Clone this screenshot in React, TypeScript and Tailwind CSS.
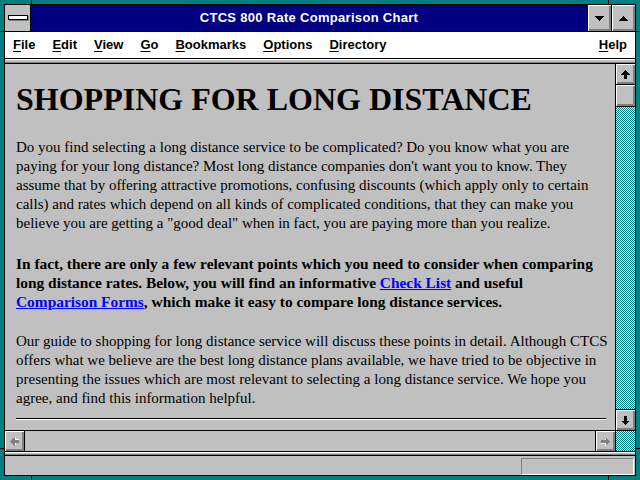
import React from 'react';

const bevel = 'bg-[#c0c0c0] shadow-[inset_1px_1px_0_#ffffff,inset_-1px_-1px_0_#808080,inset_-2px_-2px_0_#808080]';
const dither = 'bg-[repeating-conic-gradient(#008080_0_25%,#ffffff_0_50%)] bg-[length:2px_2px]';

function Arrow({ dir, disabled }: { dir: 'up' | 'down' | 'left' | 'right'; disabled?: boolean }) {
  const rot = { up: 0, right: 90, down: 180, left: 270 }[dir];
  const pts = '4.5,0 9,4.5 6,4.5 6,9 3,9 3,4.5 0,4.5';
  return (
    <svg width="9" height="9" viewBox="0 0 9 9" shapeRendering="crispEdges" style={{ transform: `rotate(${rot}deg)` }}>
      {disabled ? (
        <>
          <polygon points={pts} fill="#ffffff" transform="translate(1,1)" />
          <polygon points={pts} fill="#808080" />
        </>
      ) : (
        <polygon points={pts} fill="#000000" />
      )}
    </svg>
  );
}

function Triangle({ up }: { up?: boolean }) {
  return (
    <svg width="9" height="5" viewBox="0 0 9 5" shapeRendering="crispEdges">
      <polygon points={up ? '4.5,0 9,5 0,5' : '0,0 9,0 4.5,5'} fill="#000000" />
    </svg>
  );
}

function MenuItem({ first, rest }: { first: string; rest: string }) {
  return (
    <span>
      <span className="underline underline-offset-2">{first}</span>
      {rest}
    </span>
  );
}

export default function App() {
  return (
    <div className="relative w-[640px] h-[480px] bg-[#008080] p-[4px]">
      {/* frame corner marks */}
      <div className="absolute left-[31px] top-0 w-px h-[5px] bg-black" />
      <div className="absolute left-[608px] top-0 w-px h-[5px] bg-black" />
      <div className="absolute left-[31px] bottom-0 w-px h-[5px] bg-black" />
      <div className="absolute left-[608px] bottom-0 w-px h-[5px] bg-black" />
      <div className="absolute left-0 top-[31px] w-[5px] h-px bg-black" />
      <div className="absolute right-0 top-[31px] w-[5px] h-px bg-black" />
      <div className="absolute left-0 top-[448px] w-[5px] h-px bg-black" />
      <div className="absolute right-0 top-[448px] w-[5px] h-px bg-black" />

      <div className="w-full h-full border border-black bg-[#c0c0c0] flex flex-col font-['Liberation_Sans',Arial,sans-serif]">
        {/* title bar */}
        <div className="h-[27px] flex border-b border-black shrink-0">
          <div className="w-[26px] bg-[#c0c0c0] border-r border-black flex items-center justify-center">
            <div className="w-[20px] h-[5px] bg-white border border-black shadow-[1px_1px_0_#808080] mt-[-1px]" />
          </div>
          <div className="flex-1 bg-[#000080] text-white font-bold text-[13px] tracking-[0.3px] flex items-center justify-center">
            CTCS 800 Rate Comparison Chart
          </div>
          <div className={`w-[24px] border-l border-black flex items-center justify-center ${bevel}`}>
            <Triangle />
          </div>
          <div className={`w-[24px] border-l border-black flex items-center justify-center ${bevel}`}>
            <Triangle up />
          </div>
        </div>

        {/* menu bar */}
        <div className="h-[27px] bg-white border-b border-black flex items-center pl-[8px] pr-[8px] text-[13px] font-bold text-black shrink-0">
          <div className="flex gap-[17px]">
            <MenuItem first="F" rest="ile" />
            <MenuItem first="E" rest="dit" />
            <MenuItem first="V" rest="iew" />
            <MenuItem first="G" rest="o" />
            <MenuItem first="B" rest="ookmarks" />
            <MenuItem first="O" rest="ptions" />
            <MenuItem first="D" rest="irectory" />
          </div>
          <div className="ml-auto">
            <MenuItem first="H" rest="elp" />
          </div>
        </div>

        <div className="h-[5px] bg-[#c0c0c0] border-b border-black shadow-[inset_0_1px_0_#ffffff,inset_0_-1px_0_#808080] shrink-0" />

        {/* page + vertical scrollbar */}
        <div className="h-[366px] flex shrink-0">
          <div className="flex-1 overflow-hidden pl-[11px] pr-[9px] pt-[19px] text-black font-['Liberation_Serif','Times_New_Roman',serif] whitespace-nowrap">
            <h1 className="text-[32px] leading-[32px] font-bold mb-[23px]">SHOPPING FOR LONG DISTANCE</h1>
            <p className="text-[15px] leading-[19px] mb-[21px]">
              Do you find selecting a long distance service to be complicated? Do you know what you are<br />
              paying for your long distance? Most long distance companies don't want you to know. They<br />
              assume that by offering attractive promotions, confusing discounts (which apply only to certain<br />
              calls) and rates which depend on all kinds of complicated conditions, that they can make you<br />
              believe you are getting a "good deal" when in fact, you are paying more than you realize.
            </p>
            <p className="text-[15.4px] leading-[19px] mb-[21px] font-bold">
              In fact, there are only a few relevant points which you need to consider when comparing<br />
              long distance rates. Below, you will find an informative{' '}
              <a className="text-[#0000ff] underline">Check List</a> and useful<br />
              <a className="text-[#0000ff] underline">Comparison Forms</a>, which make it easy to compare long distance services.
            </p>
            <p className="text-[15px] leading-[19px] mb-[10px]">
              Our guide to shopping for long distance service will discuss these points in detail. Although CTCS<br />
              offers what we believe are the best long distance plans available, we have tried to be objective in<br />
              presenting the issues which are most relevant to selecting a long distance service. We hope you<br />
              agree, and find this information helpful.
            </p>
            <div className="h-[2px] border-t border-black border-b border-b-white" />
          </div>
          <div className="w-[20px] border-l border-black flex flex-col">
            <div className={`h-[21px] border-b border-black flex items-center justify-center ${bevel}`}>
              <Arrow dir="up" />
            </div>
            <div className={`h-[22px] border-b border-black ${bevel}`} />
            <div className={`flex-1 ${dither}`} />
            <div className={`h-[21px] border-t border-black flex items-center justify-center ${bevel}`}>
              <Arrow dir="down" />
            </div>
          </div>
        </div>

        {/* horizontal scrollbar */}
        <div className="h-[21px] border-t border-black flex shrink-0">
          <div className={`w-[20px] border-r border-black flex items-center justify-center ${bevel}`}>
            <Arrow dir="left" disabled />
          </div>
          <div className="flex-1 bg-[#c0c0c0]" />
          <div className={`w-[20px] border-l border-black flex items-center justify-center ${bevel}`}>
            <Arrow dir="right" disabled />
          </div>
          <div className={`w-[20px] border-l border-black ${dither}`} />
        </div>

        <div className="h-[5px] border-t border-b border-black bg-[#c0c0c0] shadow-[inset_0_1px_0_#ffffff,inset_0_-1px_0_#808080] shrink-0" />

        {/* status bar */}
        <div className="flex-1 flex items-start justify-end pt-[2px] pr-[1px]">
          <div className="w-[113px] h-[17px] border-t border-l border-[#808080] border-b border-r border-b-white border-r-white" />
        </div>
      </div>
    </div>
  );
}
